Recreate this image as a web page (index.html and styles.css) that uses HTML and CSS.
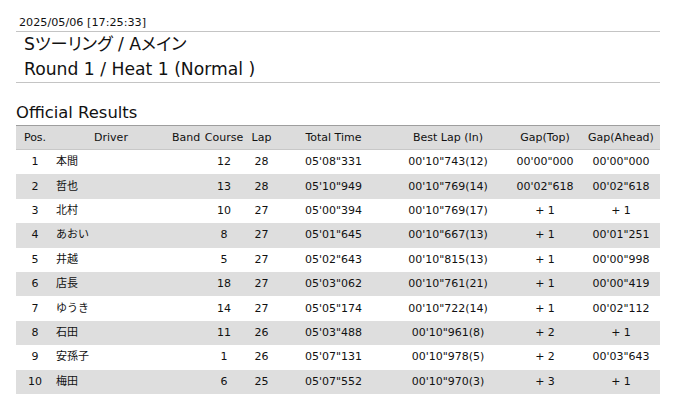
FILE: index.html
```html
<!DOCTYPE html>
<html lang="ja">
<head>
<meta charset="utf-8">
<title>Official Results</title>
<link rel="stylesheet" href="styles.css">
</head>
<body>
<div class="page">
  <div class="stamp">2025/05/06 [17:25:33]</div>
  <div class="titles">
    <div class="title">Sツーリング / Aメイン</div>
    <div class="title">Round 1 / Heat 1 (Normal )</div>
  </div>
  <h2 class="section">Official Results</h2>
  <div class="results">
    <div class="row head">
      <span>Pos.</span><span>Driver</span><span>Band</span><span>Course</span><span>Lap</span><span>Total Time</span><span>Best Lap (In)</span><span>Gap(Top)</span><span>Gap(Ahead)</span>
    </div>
    <div class="row"><span>1</span><span class="name">本間</span><span></span><span>12</span><span>28</span><span>05'08"331</span><span>00'10"743(12)</span><span>00'00"000</span><span>00'00"000</span></div>
    <div class="row alt"><span>2</span><span class="name">哲也</span><span></span><span>13</span><span>28</span><span>05'10"949</span><span>00'10"769(14)</span><span>00'02"618</span><span>00'02"618</span></div>
    <div class="row"><span>3</span><span class="name">北村</span><span></span><span>10</span><span>27</span><span>05'00"394</span><span>00'10"769(17)</span><span>+ 1</span><span>+ 1</span></div>
    <div class="row alt"><span>4</span><span class="name">あおい</span><span></span><span>8</span><span>27</span><span>05'01"645</span><span>00'10"667(13)</span><span>+ 1</span><span>00'01"251</span></div>
    <div class="row"><span>5</span><span class="name">井越</span><span></span><span>5</span><span>27</span><span>05'02"643</span><span>00'10"815(13)</span><span>+ 1</span><span>00'00"998</span></div>
    <div class="row alt"><span>6</span><span class="name">店長</span><span></span><span>18</span><span>27</span><span>05'03"062</span><span>00'10"761(21)</span><span>+ 1</span><span>00'00"419</span></div>
    <div class="row"><span>7</span><span class="name">ゆうき</span><span></span><span>14</span><span>27</span><span>05'05"174</span><span>00'10"722(14)</span><span>+ 1</span><span>00'02"112</span></div>
    <div class="row alt"><span>8</span><span class="name">石田</span><span></span><span>11</span><span>26</span><span>05'03"488</span><span>00'10"961(8)</span><span>+ 2</span><span>+ 1</span></div>
    <div class="row"><span>9</span><span class="name">安孫子</span><span></span><span>1</span><span>26</span><span>05'07"131</span><span>00'10"978(5)</span><span>+ 2</span><span>00'03"643</span></div>
    <div class="row alt"><span>10</span><span class="name">梅田</span><span></span><span>6</span><span>25</span><span>05'07"552</span><span>00'10"970(3)</span><span>+ 3</span><span>+ 1</span></div>
  </div>
</div>
</body>
</html>
```

FILE: styles.css
```css
html, body {
  margin: 0;
  padding: 0;
  background: #ffffff;
}

body {
  font-family: "DejaVu Sans", "Noto Sans CJK JP", sans-serif;
  color: #111111;
  font-size: 11px;
}

.page {
  width: 644px;
  padding: 16px 0 0 16px;
}

.stamp {
  font-size: 11.2px;
  line-height: 13px;
  padding: 0 0 2px 3px;
  border-bottom: 1px solid #c4c4c4;
}

.titles {
  padding: 0 0 0 8px;
  border-bottom: 1px solid #c4c4c4;
}

.title {
  font-size: 17.2px;
  line-height: 25px;
  font-feature-settings: "palt";
}

.section {
  margin: 20px 0 2px 0;
  font-size: 16.4px;
  line-height: 20px;
  font-weight: normal;
}

.results {
  display: flex;
  flex-direction: column;
}

.row {
  display: grid;
  grid-template-columns: 38px 114px 36px 40px 35px 109px 120px 74px 78px;
  height: 24.4px;
  align-items: center;
  text-align: center;
  line-height: 14px;
  white-space: nowrap;
}

.row.head {
  height: 25px;
  box-sizing: border-box;
  background: #dcdcdc;
  border-top: 1px solid #9e9e9e;
  border-bottom: 1px solid #c8c8c8;
}

.row.alt {
  background: #dedede;
}

.row .name {
  text-align: left;
  padding-left: 2px;
}
```
